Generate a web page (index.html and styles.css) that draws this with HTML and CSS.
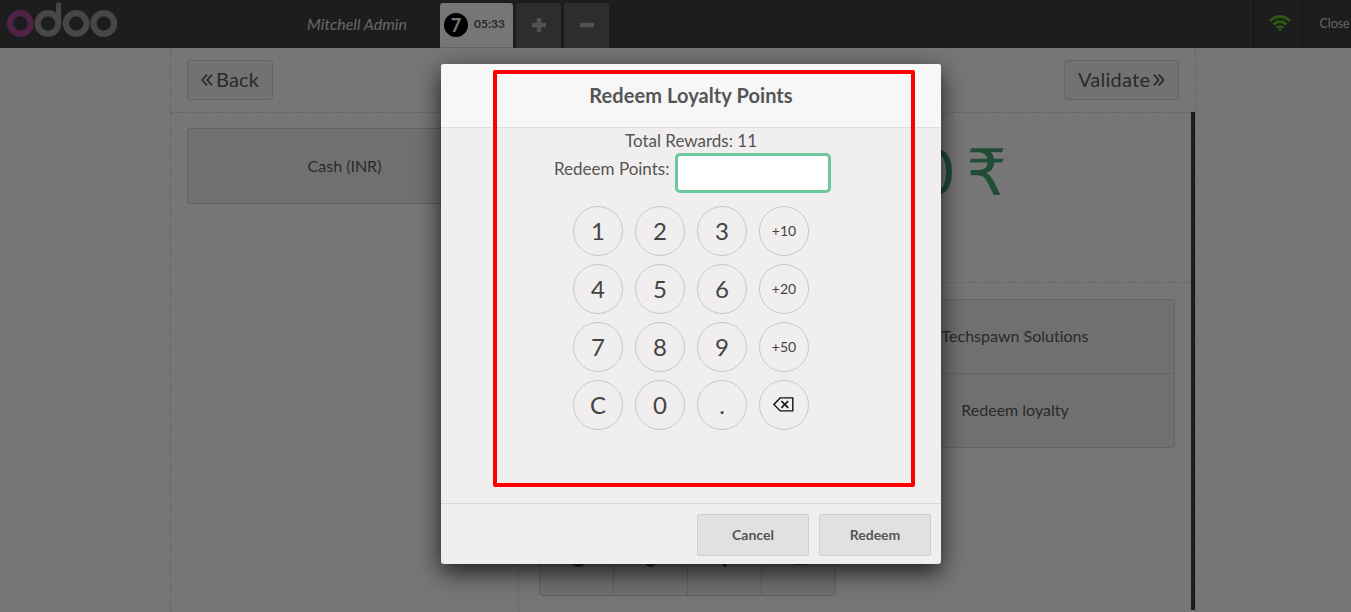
FILE: index.html
```html
<!DOCTYPE html>
<html lang="en">
<head>
<meta charset="utf-8">
<title>Redeem Loyalty Points</title>
<link rel="stylesheet" href="styles.css">
</head>
<body>
<div class="pos">
  <header class="topbar">
    <div class="brand">
      <svg class="logo" width="112" height="38" viewBox="0 0 112 38" fill="none" stroke="#8e8e8e" stroke-width="6.2">
        <circle cx="13.4" cy="22.5" r="10.3" stroke="#a0448c"/>
        <circle cx="41" cy="22.5" r="10.3"/>
        <path d="M51.6 22.5V3.8" stroke-width="5" stroke-linecap="round"/>
        <circle cx="69.2" cy="22.5" r="10.3"/>
        <circle cx="96.8" cy="22.5" r="10.3"/>
      </svg>
      <span class="username">Mitchell Admin</span>
    </div>
    <nav class="orders">
      <div class="order"><span class="seq">7</span><span class="time">05:33</span></div>
      <div class="tab"><svg width="16" height="16"><path d="M8 1v14M1 8h14" stroke="#a2a2a2" stroke-width="4.4"/></svg></div>
      <div class="tab"><svg width="16" height="16"><path d="M1 8h14" stroke="#a2a2a2" stroke-width="4.4"/></svg></div>
    </nav>
    <div class="status">
      <div class="wifi">
        <svg width="22" height="17" viewBox="0 0 22 17" fill="none" stroke="#5cb02c" stroke-width="2.9">
          <path d="M1 6Q11-2.8 21 6M4.3 9.5Q11 3.5 17.7 9.5M7.6 12.9Q11 9.9 14.4 12.9"/>
          <path d="M9 14.2Q11 12.8 13 14.2L11 16.4z" fill="#5cb02c" stroke="none"/>
        </svg>
      </div>
      <div class="close">Close</div>
    </div>
  </header>
  <main class="screen">
    <div class="actions">
      <div class="action"><svg width="12" height="14" viewBox="0 0 12 14"><path d="M6 1.5L1.3 7 6 12.5M11 1.5L6.3 7 11 12.5"/></svg><span>Back</span></div>
      <div class="action validate"><span>Validate</span><svg width="12" height="14" viewBox="0 0 12 14"><path d="M1 1.5L5.7 7 1 12.5M6 1.5L10.7 7 6 12.5"/></svg></div>
    </div>
    <div class="columns">
      <section class="methods"><div class="method">Cash (INR)</div></section>
      <section class="payment">
        <div class="total">0 <span class="currency">₹</span></div>
        <div class="details">
          <div class="side-buttons"><div>Techspawn Solutions</div><div>Redeem loyalty</div></div>
          <div class="pay-keys"><div>C</div><div>0</div><div>.</div><div><svg width="21" height="15" viewBox="0 0 21 15"><use href="#backspace"/></svg></div></div>
        </div>
      </section>
    </div>
  </main>
</div>
<div class="overlay">
  <div class="dialog">
    <h1 class="title">Redeem Loyalty Points</h1>
    <div class="body">
      <div class="rewards">Total Rewards: 11</div>
      <label class="redeem"><span>Redeem Points:</span><input class="points" type="text"></label>
      <div class="keys">
        <div class="key">1</div><div class="key">2</div><div class="key">3</div><div class="key small">+10</div>
        <div class="key">4</div><div class="key">5</div><div class="key">6</div><div class="key small">+20</div>
        <div class="key">7</div><div class="key">8</div><div class="key">9</div><div class="key small">+50</div>
        <div class="key">C</div><div class="key">0</div><div class="key">.</div>
        <div class="key erase"><svg width="21" height="15" viewBox="0 0 21 15"><g id="backspace" fill="none" stroke="#111" stroke-width="1.4"><path d="M7.2 .9H19.8V13.9H7.2L.9 7.4z"/><path d="M8.4 4L15.2 10.8M15.2 4L8.4 10.8" stroke-width="1.7"/></g></svg></div>
      </div>
    </div>
    <div class="footer"><div class="button">Cancel</div><div class="button">Redeem</div></div>
    <div class="highlight"></div>
  </div>
</div>
</body>
</html>
```
FILE: styles.css
```css
* { box-sizing: border-box; }
body { margin: 0; font-family: Lato, "Noto Sans", sans-serif; font-variant-ligatures: none; color: #555; overflow: hidden; }
.pos { height: 612px; background: #eeeded; display: flex; flex-direction: column; }

.topbar { height: 48px; flex: none; background: #3a3a3a; display: flex; }
.brand { width: 440px; display: flex; justify-content: space-between; padding-right: 33px; }
.logo { margin: 1px 0 0 7px; }
.username { font-size: 16px; font-style: italic; line-height: 48px; color: #ccc; }
.orders { flex: 1; display: flex; gap: 3px; padding-top: 3px; }
.order { width: 73px; height: 45px; background: #eeeded; border-radius: 3px 3px 0 0; border-bottom: 1px solid #c8c8c8; display: flex; align-items: center; padding-left: 4px; gap: 6px; }
.seq { width: 24px; height: 24px; border-radius: 50%; background: #000; color: #eee; font-size: 18px; font-weight: 700; line-height: 24px; text-align: center; }
.time { font-size: 12px; font-weight: 700; line-height: 14px; padding-bottom: 3px; }
.tab { width: 45px; height: 45px; background: #5b5b5b; border-radius: 3px 3px 0 0; display: flex; align-items: center; justify-content: center; padding-bottom: 2px; }
.status { width: 98px; display: flex; }
.wifi, .close { border-left: 1px solid #262626; }
.wifi { width: 49px; display: flex; justify-content: center; padding: 15px 0 0 4px; }
.close { flex: 1; font-size: 12.4px; line-height: 48px; padding-left: 16.5px; color: #ccc; }

.screen { width: 1026px; flex: 1; margin-left: 170px; border: 1px dashed #cacaca; border-width: 0 1px; display: flex; flex-direction: column; }
.actions { height: 65px; border-bottom: 1px dashed #cacaca; display: flex; justify-content: space-between; padding: 12px 16px; }
.action { height: 40px; border: 1px solid #cacaca; border-radius: 3px; background: #e5e4e4; padding: 0 13px; font-size: 20px; letter-spacing: .15px; display: flex; align-items: center; gap: 3px; }
.validate { width: 115px; letter-spacing: .25px; }
.action span { padding-bottom: 2px; }
.action svg { fill: none; stroke: #555; stroke-width: 1.9; }
.columns { flex: 1; display: flex; margin-top: -1px; }
.methods { width: 347px; padding: 16px; }
.method { height: 76px; border: 1px solid #c0c0c0; border-radius: 3px; background: #e2e1e1; font-size: 16px; line-height: 74px; text-align: center; }
.payment { flex: 1; border-left: 1px dashed #cacaca; background: linear-gradient(#3a3a3a, #3a3a3a) right top / 4px 498px no-repeat; padding-right: 4px; }
.total { height: 171px; border-bottom: 1px dashed #cacaca; text-align: right; padding: 20px 184px 0 0; font-size: 64px; line-height: 77px; color: #43996b; text-shadow: 0 2px rgba(255, 255, 255, .2); }
.currency { font-family: "DejaVu Sans", sans-serif; margin-left: -4px; }
.details { display: flex; flex-direction: column; padding: 16px 16px 0 20px; }
.side-buttons { align-self: flex-end; width: 320px; height: 149px; border: 1px solid #c8c8c8; border-radius: 3px; background: #e2e1e1; font-size: 16px; text-align: center; line-height: 72px; }
.side-buttons div { height: 73px; }
.side-buttons div + div { height: 74px; border-top: 1px solid #c8c8c8; }
.pay-keys { width: 297px; height: 75px; margin-top: 73px; border: 1px solid #c0c0c0; border-radius: 0 0 4px 4px; background: #e2e1e1; display: flex; font-size: 24px; font-weight: 700; text-align: center; line-height: 71px; }
.pay-keys div { width: 73px; }
.pay-keys div + div { width: 74px; border-left: 1px solid #c0c0c0; }
.pay-keys svg { vertical-align: 2px; margin-right: 3px; }

.overlay { position: absolute; inset: 0; background: rgba(0, 0, 0, .5); padding: 64px 0 0 441px; }
.dialog { position: relative; width: 500px; height: 500px; background: #f0eeee; border-radius: 3px; box-shadow: 0 8px 23px rgba(0, 0, 0, .75); display: flex; flex-direction: column; }
.title { margin: 0; height: 64px; background: #f7f7f7; border-bottom: 1px solid #e0dfdf; border-radius: 3px 3px 0 0; font-size: 20px; letter-spacing: .08px; line-height: 63px; text-align: center; }
.body { flex: 1; font-size: 17px; }
.rewards { text-align: center; line-height: 25px; height: 25px; }
.redeem { display: flex; padding-left: 113px; line-height: 31px; gap: 5px; }
.redeem span { width: 116px; white-space: nowrap; }
.points { width: 156px; height: 40px; border: 3px solid #6ec89b; border-radius: 5px; background: #fff; outline: none; padding: 0 8px; font: inherit; }
.keys { display: grid; grid-template-columns: repeat(4, 50px); gap: 8px 12px; padding: 13px 0 0 132px; }
.key { height: 50px; border: 1px solid #c8c8c8; border-radius: 50%; font-size: 24px; line-height: 48px; text-align: center; color: #444; }
.key.small { font-size: 14px; }
.key.erase { display: flex; align-items: center; justify-content: center; padding: 0 2px 1px 0; }
.footer { height: 61px; border-top: 1px solid #dad9d9; display: flex; justify-content: flex-end; gap: 10px; padding: 10px; }
.button { width: 112px; height: 42px; border: 1px solid #cecece; border-radius: 2px; background: #e2e1e1; font-size: 14px; font-weight: 700; line-height: 40px; text-align: center; }
/* Annotation frame around the redeem form */
.highlight { position: absolute; left: 52px; top: 6px; width: 422px; height: 417px; border: 4px solid #f00; border-radius: 2px; }
```
